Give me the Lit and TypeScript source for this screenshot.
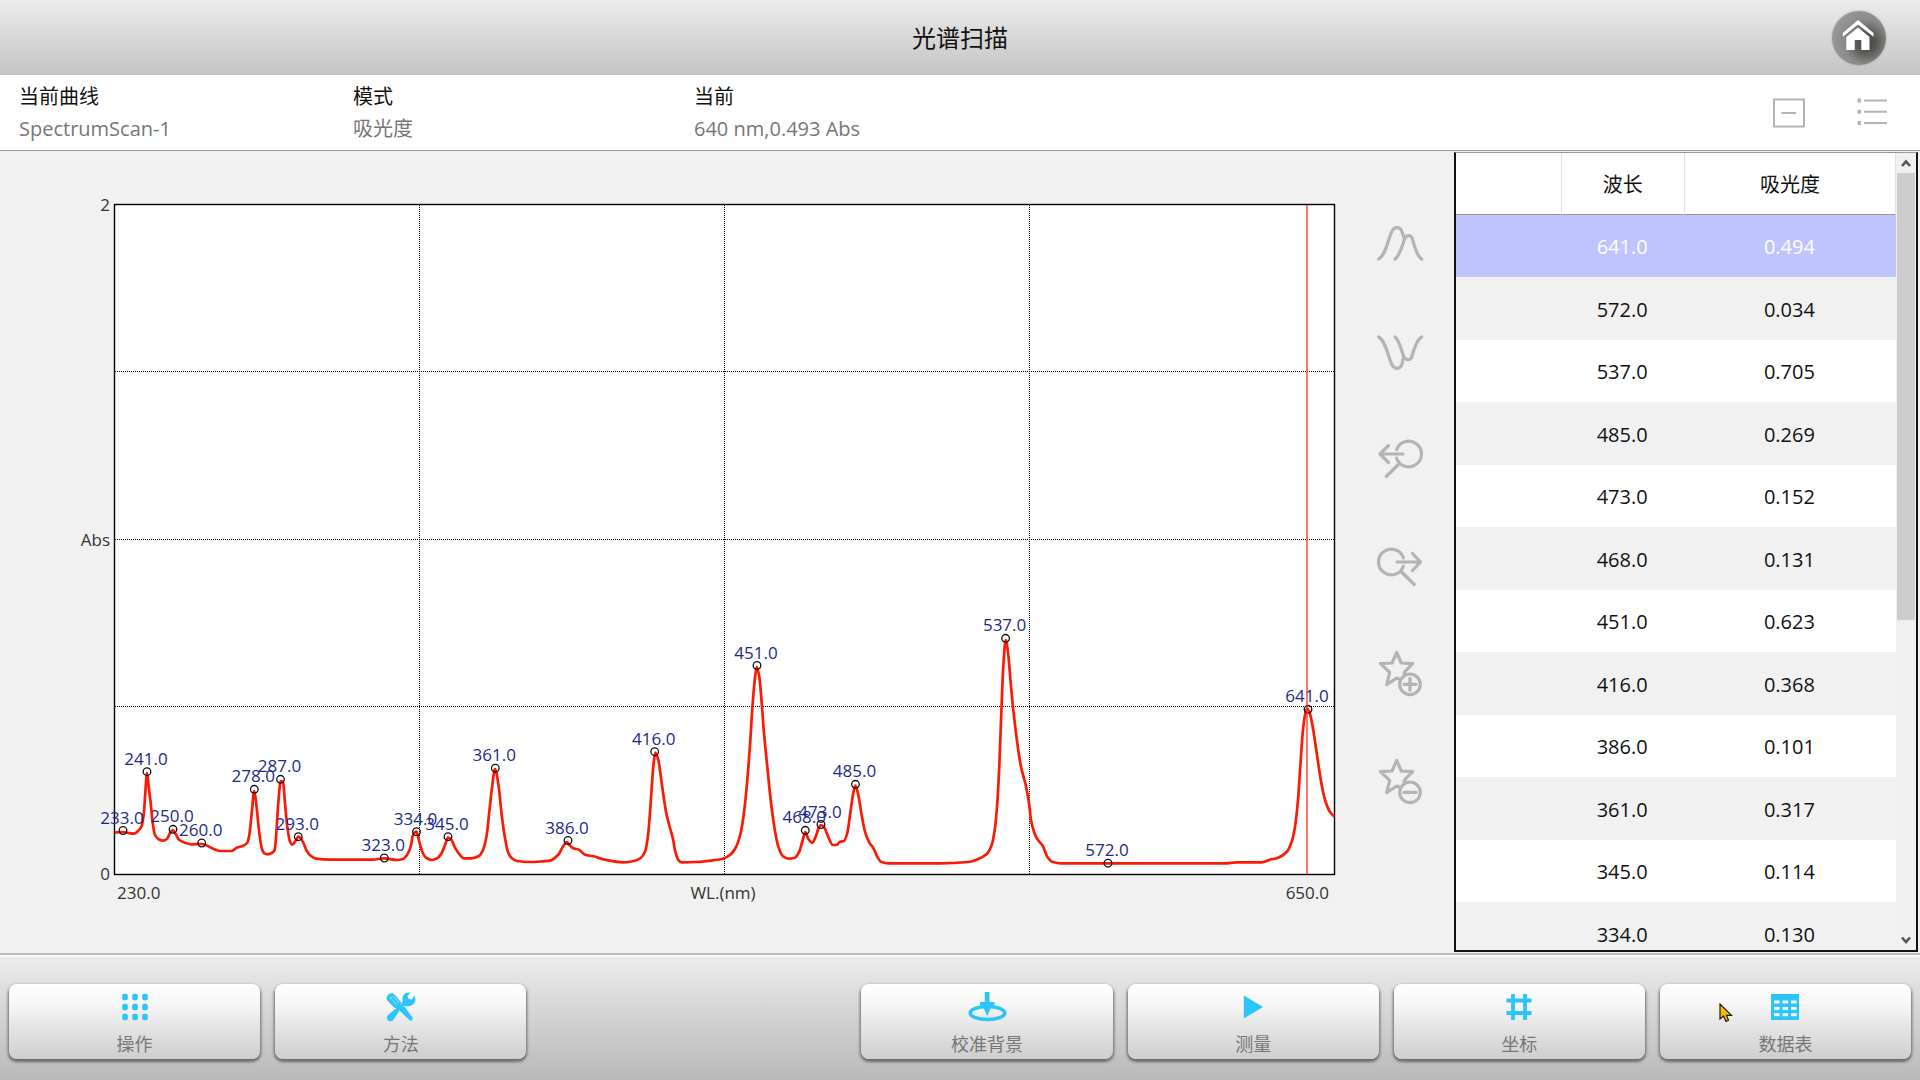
import { LitElement, html, css, svg } from "lit";
import { customElement, property, state } from "lit/decorators.js";

type Point = [number, number];

interface Peak {
  label: string;
  x: number;
  y: number;
}

/* Sampled trace, in the coordinates of the chart's view box. */
const TRACE: Point[] = [
  [114.5, 832.5], [123, 832], [128, 833], [134, 833.7], [138, 831], [141.7, 826], [144, 811.7],
  [145.3, 793], [147, 773], [148.7, 786.7], [150.7, 803], [152.7, 823], [155, 835], [158.3, 839],
  [163.3, 840.7], [166.7, 839], [170, 833.3], [172.7, 830], [175.7, 834], [179.3, 840], [185, 842.7],
  [191.7, 844.3], [201.7, 844], [206.7, 845.5], [211.7, 848], [220, 851], [231.7, 851], [236.7, 847.7],
  [243.3, 845.7], [247.3, 842.7], [249.3, 835], [251.7, 813], [254.3, 791], [256.7, 808], [259, 830],
  [261.7, 848], [264.3, 853.3], [267.7, 854.3], [271.7, 853], [274.7, 850], [276.3, 833], [278.3, 803],
  [280.7, 781], [283, 782], [285, 803], [287.3, 826.7], [290, 841.7], [292.3, 844.7], [295.7, 840.7],
  [298.3, 836.7], [302.3, 840.7], [306.7, 850.7], [310.7, 855.7], [316, 858.7], [330, 859.7],
  [373, 859.7], [384, 858.3], [396.7, 860], [403, 859], [407, 855], [410.7, 846.7], [413, 835],
  [416.5, 831.7], [419.3, 841.7], [422.3, 851.7], [425.7, 857.3], [431.7, 860], [437.3, 858.3],
  [441.7, 853], [445, 845], [448, 837.7], [451, 839.3], [455, 847.7], [460, 855], [464, 858.3],
  [471.7, 858.3], [479, 856], [483.3, 849.3], [486.7, 835], [489.3, 811.7], [492, 788], [495, 769],
  [498.7, 786.7], [501.7, 815], [505, 838], [508.3, 853], [511.7, 858], [516.7, 861], [530, 862],
  [543, 861.3], [550, 860.7], [558.3, 854.7], [562.7, 847], [566.7, 842], [570, 845.7], [573.3, 848.3],
  [579, 849.7], [585, 854.7], [593.3, 856.3], [605, 859.7], [623.3, 862.3], [635, 860.7],
  [640.7, 858], [645, 851.7], [647.7, 838], [649.7, 816.7], [651.7, 788], [653.3, 766.7],
  [655.3, 752.5], [658.3, 760], [661.7, 783], [666, 811.7], [670, 828], [673, 839], [675.3, 851.7],
  [678.3, 860], [681.7, 862.3], [696.7, 862], [713, 860.3], [723, 858.7], [730, 855], [736, 847],
  [740.7, 833], [744.3, 810], [747.3, 780], [750, 745], [752.7, 703], [755, 678], [756.7, 667],
  [759.3, 676.7], [761.7, 703], [764, 733], [767.3, 766.7], [770.7, 800], [774.3, 826.7],
  [778.3, 846.7], [782.7, 856], [788.3, 858.7], [795, 857.7], [799.3, 851.7], [802.7, 840],
  [805.3, 832], [808.3, 839], [812.3, 842.7], [815.7, 836.7], [818.3, 829], [821, 825],
  [824.3, 827.7], [828.3, 837], [832.7, 845], [836.7, 845], [840, 841.7], [844, 841], [847.3, 833],
  [850.3, 813], [852.7, 796.7], [855.3, 785.5], [858.3, 795], [861.3, 813], [865, 831.7],
  [869.3, 842.7], [873.3, 848], [877.3, 856.7], [881, 861.7], [888.3, 863.3], [940, 863.3],
  [968.3, 862], [978.3, 859], [986.7, 854], [991.7, 845], [995, 828], [997.3, 803], [999.3, 766.7],
  [1001.3, 713], [1003.3, 666.7], [1005.7, 640], [1008.3, 655], [1010.7, 683], [1013.3, 710],
  [1017.3, 743], [1021, 766.7], [1025.7, 785], [1029, 803], [1031, 820], [1034, 831.7],
  [1037.3, 839], [1042.7, 845.7], [1047.3, 856.7], [1052.7, 862], [1060.7, 863.3], [1108, 863.3],
  [1225, 863.3], [1236.7, 862.3], [1261.7, 862.3], [1270, 859.7], [1278, 857.7], [1286.7, 852],
  [1291.7, 841.7], [1295, 826.7], [1298, 800], [1300.3, 766.7], [1302.7, 733], [1305, 715],
  [1307, 708.7], [1309.3, 711.7], [1312.7, 726.7], [1316.7, 753], [1320, 775], [1323.3, 793],
  [1326.7, 805], [1330, 812], [1334.5, 816.7],
];

const PEAKS: Peak[] = [
  { label: "233.0", x: 123, y: 830.5 },
  { label: "241.0", x: 147, y: 771.7 },
  { label: "250.0", x: 173, y: 829.3 },
  { label: "260.0", x: 201.7, y: 843 },
  { label: "278.0", x: 254.3, y: 789.3 },
  { label: "287.0", x: 280.5, y: 779.3 },
  { label: "293.0", x: 298.3, y: 836.7 },
  { label: "323.0", x: 384.3, y: 858 },
  { label: "334.0", x: 416.5, y: 831.7 },
  { label: "345.0", x: 448, y: 836.7 },
  { label: "361.0", x: 495.3, y: 768.2 },
  { label: "386.0", x: 568, y: 840.5 },
  { label: "416.0", x: 654.7, y: 751.7 },
  { label: "451.0", x: 757, y: 665.5 },
  { label: "468.0", x: 805.3, y: 830.3 },
  { label: "473.0", x: 821, y: 824.5 },
  { label: "485.0", x: 855.5, y: 784.3 },
  { label: "537.0", x: 1005.6, y: 638.3 },
  { label: "572.0", x: 1108, y: 863.2 },
  { label: "641.0", x: 1308, y: 709.3 },
];

const ROWS: [string, string][] = [
  ["641.0", "0.494"],
  ["572.0", "0.034"],
  ["537.0", "0.705"],
  ["485.0", "0.269"],
  ["473.0", "0.152"],
  ["468.0", "0.131"],
  ["451.0", "0.623"],
  ["416.0", "0.368"],
  ["386.0", "0.101"],
  ["361.0", "0.317"],
  ["345.0", "0.114"],
  ["334.0", "0.130"],
];

/* Monotone cubic path through the points, so flat stretches never overshoot. */
function smoothPath(p: Point[]): string {
  const n = p.length;
  const d: number[] = [];
  for (let i = 0; i < n - 1; i++) d.push((p[i + 1][1] - p[i][1]) / (p[i + 1][0] - p[i][0]));
  const m = p.map((_, i) => {
    if (i === 0) return d[0];
    if (i === n - 1) return d[n - 2];
    const a = d[i - 1];
    const b = d[i];
    return a * b <= 0 ? 0 : (2 * a * b) / (a + b);
  });
  let out = `M${p[0][0]} ${p[0][1]}`;
  for (let i = 0; i < n - 1; i++) {
    const h = (p[i + 1][0] - p[i][0]) / 3;
    out += `C${(p[i][0] + h).toFixed(1)} ${(p[i][1] + m[i] * h).toFixed(1)} ${(p[i + 1][0] - h).toFixed(1)} ${(
      p[i + 1][1] - m[i + 1] * h
    ).toFixed(1)} ${p[i + 1][0]} ${p[i + 1][1]}`;
  }
  return out;
}

@customElement("spectrum-chart")
export class SpectrumChart extends LitElement {
  static styles = css`
    :host {
      display: grid;
      grid-template-columns: 114px minmax(0, 1fr);
      align-content: start;
      padding-top: 52px;
      font-size: 17px;
      line-height: 24px;
      color: #333;
    }
    .y-axis {
      display: flex;
      flex-direction: column;
      justify-content: space-between;
      align-items: flex-end;
      margin: -11px 0;
      padding-right: 4px;
    }
    .plot {
      display: block;
      width: 100%;
      height: auto;
      overflow: visible;
    }
    .x-axis {
      grid-column: 2;
      display: flex;
      justify-content: space-between;
      padding: 6px 6px 0 3px;
    }
    .area {
      fill: #fff;
      stroke: #000;
      stroke-width: 1.4;
    }
    .grid {
      fill: none;
      stroke: #000;
      stroke-dasharray: 1 1;
      shape-rendering: crispEdges;
    }
    .trace {
      fill: none;
      stroke: #fb1a05;
      stroke-width: 2.7;
      stroke-linejoin: round;
    }
    .cursor-line {
      stroke: #ff3a28;
      stroke-width: 1.4;
    }
    .marker {
      fill: none;
      stroke: #111;
      stroke-width: 1.3;
    }
    .label {
      fill: #1c2a8c;
      font-size: 17px;
      text-anchor: middle;
    }
  `;

  render() {
    return html`
      <div class="y-axis"><span>2</span><span>Abs</span><span>0</span></div>
      <svg class="plot" viewBox="114 204 1221 671" role="img" aria-label="光谱扫描">
        <rect class="area" x="114.5" y="204.5" width="1220" height="670" />
        <path
          class="grid"
          d="M419.5 205V874M724.5 205V874M1029.5 205V874M115 371.5H1334M115 539.5H1334M115 706.5H1334"
        />
        <path class="trace" d=${smoothPath(TRACE)} />
        ${PEAKS.map(
          (p) => svg`<circle class="marker" cx=${p.x} cy=${p.y} r="3.8" />
            <text class="label" x=${p.x - 1} y=${p.y - 7}>${p.label}</text>`
        )}
        <path class="cursor-line" d="M1307 205V874" />
      </svg>
      <div class="x-axis"><span>230.0</span><span>WL.(nm)</span><span>650.0</span></div>
    `;
  }
}

const TOOL_ICONS: [string, unknown][] = [
  ["峰", svg`<path d="M2.7 40C9 37 12 22 15 14.500C17.500 7 24 7 26 13L28.500 20" /><path d="M19 40.300C24 36 26.500 26 28.500 20C30.500 15.500 35 15.500 36.500 20C38.500 28 41 37 45.700 40.300" />`],
  ["谷", svg`<path d="M2.700 10C9 13.500 12 27.500 15 35.500C17.500 43 24 43 26 37L27.500 30.500" /><path d="M19 10C23.500 13.500 25.500 23.500 27.500 29C29 33.500 34 33.500 35.500 30.500C37.500 23.500 40.500 12.500 45.700 10" />`],
  ["上一个", svg`<path d="M20.600 15.800A12.800 12.800 0 1 1 20.600 24.200M27 20H4M12.500 11.500L4 20L12.500 28.500M23.500 29.500L10.200 42.500" />`],
  ["下一个", svg`<path d="M27.400 15.800A12.800 12.800 0 1 0 27.400 24.200M21 20H44.500M36.500 11.500L44.500 20L36.500 28.500M25 29.500L38.300 42.500" />`],
  ["添加标记", svg`<path d="M28 25.500L29 22.300L36.700 14.600L25.300 14L20.700 3.500L16 14L4.500 14.600L13.700 23.300L10.700 35.600L20.700 29L23 30" /><circle cx="34" cy="35.300" r="10.300" /><path d="M28 35.300H40M34 29.300V41.300" />`],
  ["删除标记", svg`<path d="M28 25.500L29 22.300L36.700 14.600L25.300 14L20.700 3.500L16 14L4.500 14.600L13.700 23.300L10.700 35.600L20.700 29L23 30" /><circle cx="34" cy="35.300" r="10.300" /><path d="M28 35.300H40" />`],
];

@customElement("chart-tools")
export class ChartTools extends LitElement {
  static styles = css`
    :host {
      display: flex;
      flex-direction: column;
      justify-content: space-between;
      align-items: center;
      padding: 67px 0 147px 11px;
    }
    .tool {
      width: 48px;
      height: 48px;
      padding: 0;
      border: 0;
      background: none;
      cursor: pointer;
    }
    .icon {
      display: block;
      width: 48px;
      height: 48px;
      fill: none;
      stroke: #b4b4b4;
      stroke-width: 3.2;
      stroke-linecap: round;
      stroke-linejoin: round;
    }
  `;

  render() {
    return TOOL_ICONS.map(
      ([name, icon]) => html`<button class="tool" type="button" aria-label=${name}>
        <svg class="icon" viewBox="0 0 48 48" aria-hidden="true">${icon}</svg>
      </button>`
    );
  }
}

@customElement("peak-table")
export class PeakTable extends LitElement {
  @state() private selected = 0;

  static styles = css`
    :host {
      display: flex;
      min-height: 0;
      border: 2px solid #111;
      border-top: 1px solid #999;
      background: #fff;
      box-sizing: border-box;
    }
    .view {
      flex: 1;
      min-width: 0;
      overflow: hidden;
    }
    .table {
      width: 100%;
      border-collapse: separate;
      border-spacing: 0;
      table-layout: fixed;
      font-size: 20px;
      line-height: 28px;
      color: #111;
    }
    .blank {
      width: 24%;
    }
    .wave {
      width: 28%;
    }
    th {
      height: 62px;
      padding: 2px 0 0;
      box-sizing: border-box;
      border-right: 1px solid #e2e2e2;
      border-bottom: 1px solid #999;
      font-weight: 400;
    }
    td {
      height: 62px;
      box-sizing: border-box;
      padding: 2px 2px 0 0;
      text-align: center;
    }
    .row:nth-child(even) td {
      height: 63px;
      background: #f1f1f1;
    }
    .row.selected td {
      background: #bfc4ff;
      color: #fff;
    }
    .scrollbar {
      width: 20px;
      display: flex;
      flex-direction: column;
      background: #f0f0f0;
    }
    .arrow {
      height: 20px;
      padding: 0;
      border: 0;
      background: none;
    }
    .chevron {
      display: block;
      margin: auto;
      width: 12px;
      height: 12px;
      fill: none;
      stroke: #555;
      stroke-width: 2.6;
    }
    .track {
      flex: 1;
      padding: 0 1px;
    }
    .thumb {
      height: 59%;
      background: #cdcdcd;
    }
  `;

  render() {
    return html`
      <div class="view">
        <table class="table">
          <thead>
            <tr>
              <th class="blank"></th>
              <th class="wave">波长</th>
              <th>吸光度</th>
            </tr>
          </thead>
          <tbody>
            ${ROWS.map(
              ([wl, abs], i) => html`<tr
                class="row ${i === this.selected ? "selected" : ""}"
                @click=${() => (this.selected = i)}
              >
                <td></td>
                <td>${wl}</td>
                <td>${abs}</td>
              </tr>`
            )}
          </tbody>
        </table>
      </div>
      <div class="scrollbar">
        <button class="arrow" type="button" aria-label="向上">
          <svg class="chevron" viewBox="0 0 12 12"><path d="M2 9L6 4.500L10 9" /></svg>
        </button>
        <div class="track"><div class="thumb"></div></div>
        <button class="arrow" type="button" aria-label="向下">
          <svg class="chevron" viewBox="0 0 12 12"><path d="M2 3.500L6 8L10 3.500" /></svg>
        </button>
      </div>
    `;
  }
}

const ACTION_ICONS: Record<string, unknown> = {
  操作: svg`${[10, 20, 30].map((x) =>
    [6, 16, 26].map((y) => svg`<rect x=${x - 2.8} y=${y - 3.2} width="5.600" height="6.400" rx="2" />`)
  )}`,
  方法: svg`<path d="M6.500 4.500C8.500 1.500 12 1.500 14 4L20.500 12L17 17.500L13 16.500L6.500 9.500C5 8 5.200 6 6.500 4.500Z" />
    <path d="M27 1.500C23 2 20.500 6 21.800 10L20 13.500L7 24C5.500 25.500 5.500 28 7 29.500C8.500 31 11 30.500 12.300 29L19.500 18L23.500 14.800C28 16.500 33.500 14 34.500 9.500L33.800 4.500L30.500 8.500L27.500 8L26.500 5L29.500 1.700Z" />
    <path d="M20 16L23.500 15.500L31.500 26.500C32.500 28.500 30.500 30.500 28.800 29.500L18.500 19.500Z" />
    <path class="groove" d="M9 6L15.500 13.500M12 5L18 12" />`,
  校准背景: svg`<ellipse class="ring" cx="20.500" cy="22" rx="17.300" ry="6.500" />
    <path d="M17.800 1H22.500V11H27.500V14.500H25L20.200 25L15.500 14.500H13V11H17.800Z" />`,
  测量: svg`<path d="M10.800 4.500L30 16L10.800 27.500Z" />`,
  坐标: svg`<path class="bars" d="M14 3V29M26 3V29M7.500 9.500H32.500M7.500 22H32.500" />`,
  数据表: svg`<path d="M6 3H34V29H6Z" />
    ${[9, 17.5, 26].map((x) =>
      [9.5, 15.9, 22.2].map((y) => svg`<rect class="cell" x=${x} y=${y} width="5.600" height="3" />`)
    )}`,
};

@customElement("action-button")
export class ActionButton extends LitElement {
  @property() label = "";

  static styles = css`
    :host {
      display: block;
      position: relative;
      min-width: 0;
    }
    .button {
      display: flex;
      flex-direction: column;
      align-items: center;
      gap: 9px;
      width: 100%;
      height: 75px;
      padding: 7px 0 0;
      border: 0;
      border-radius: 8px;
      background: linear-gradient(#fff 0%, #f6f6f6 28%, #e6e6e6 55%, #cecece 100%);
      box-shadow: 0 2px 3px 1px #6a6a6a;
      font: inherit;
      font-size: 18px;
      line-height: 24px;
      color: #777;
      cursor: pointer;
    }
    .icon {
      display: block;
      width: 40px;
      height: 32px;
      fill: #2cc4f9;
    }
    .groove {
      fill: none;
      stroke: #bfeeff;
      stroke-width: 0.8;
    }
    .ring {
      fill: none;
      stroke: #2cc4f9;
      stroke-width: 3.4;
    }
    .bars {
      stroke: #2cc4f9;
      stroke-width: 3.8;
    }
    .cell {
      fill: #f3f8fa;
    }
  `;

  render() {
    return html`<button class="button" type="button">
        <svg class="icon" viewBox="0 0 40 32" aria-hidden="true">${ACTION_ICONS[this.label]}</svg>
        <span>${this.label}</span></button
      ><slot></slot>`;
  }
}

@customElement("app-root")
export class AppRoot extends LitElement {
  static styles = css`
    :host {
      display: flex;
      flex-direction: column;
      height: 100vh;
      overflow: hidden;
      background: #f1f1f1;
      font-family: "Open Sans", "Noto Sans CJK SC", sans-serif;
      color: #111;
    }
    .header {
      display: grid;
      grid-template-columns: 1fr auto 1fr;
      align-items: center;
      height: 75px;
      padding: 1px 34px 0;
      box-sizing: border-box;
      background: linear-gradient(#ececec, #c4c4c4);
    }
    .title {
      grid-column: 2;
      margin: 0;
      font-size: 24px;
      line-height: 36px;
      font-weight: 400;
    }
    .home {
      justify-self: end;
      width: 54px;
      height: 54px;
      padding: 0;
      border: 0;
      border-radius: 50%;
      background: radial-gradient(circle at 64% 58%, #454542 0%, #555552 20%, #8a8a8a 48%, #989898 75%);
      box-shadow: 0 0 2px #999;
    }
    .home-icon {
      display: block;
      width: 54px;
      height: 54px;
      fill: #fff;
    }
    .info {
      display: grid;
      grid-template-columns: 334px 341px minmax(0, 1fr) auto;
      align-items: center;
      height: 76px;
      padding: 0 32px 0 19px;
      border-bottom: 1px solid #999;
      background: #fff;
      box-sizing: border-box;
    }
    .fact {
      font-size: 20px;
      line-height: 32px;
      padding-top: 1px;
    }
    .name,
    .value {
      margin: 0;
    }
    .value {
      color: #777;
    }
    .views {
      display: flex;
      gap: 51px;
      padding-top: 1px;
    }
    .view {
      padding: 0;
      border: 0;
      background: none;
    }
    .view-icon {
      display: block;
      width: 32px;
      height: 32px;
      fill: none;
      stroke: #b4b4b4;
      stroke-width: 2;
    }
    .dots {
      fill: #b4b4b4;
      stroke: none;
    }
    .main {
      flex: 1;
      min-height: 0;
      display: grid;
      grid-template-columns: minmax(0, 1fr) 119px 464px;
      grid-template-rows: minmax(0, 1fr);
      padding: 1px 2px 1px 0;
    }
    .footer {
      display: grid;
      grid-template-columns: 251fr 251fr 305fr 251fr 251fr 251fr 251fr;
      gap: 15px;
      padding: 29px 9px 21px 9px;
      border-top: 2px solid #bbb;
      background: linear-gradient(#fff 0, #fff 1px, #ececec 2px, #b9b9b9 100%);
    }
    .measure {
      grid-column: 4;
    }
    .pointer {
      position: absolute;
      left: 59px;
      top: 19px;
      width: 14px;
      height: 20px;
      fill: #ffb80c;
      stroke: #20180a;
      stroke-width: 1.2;
      pointer-events: none;
    }
  `;

  render() {
    return html`
      <header class="header">
        <h1 class="title">光谱扫描</h1>
        <button class="home" type="button" aria-label="主页">
          <svg class="home-icon" viewBox="0 0 54 54" aria-hidden="true">
            <path d="M26 9L41.500 22V25.800L26 13.500L10.800 25.800V22Z" />
            <path d="M26 16.500L37.500 26V39H29.300V29H22.700V39H14.300V26Z" />
          </svg>
        </button>
      </header>
      <section class="info">
        <div class="fact"><p class="name">当前曲线</p><p class="value">SpectrumScan-1</p></div>
        <div class="fact"><p class="name">模式</p><p class="value">吸光度</p></div>
        <div class="fact"><p class="name">当前</p><p class="value">640 nm,0.493 Abs</p></div>
        <div class="views">
          <button class="view" type="button" aria-label="收起">
            <svg class="view-icon" viewBox="0 0 32 32"><path d="M1 2.500H31V29.500H1ZM8.500 16H23" /></svg>
          </button>
          <button class="view" type="button" aria-label="列表">
            <svg class="view-icon" viewBox="0 0 32 32">
              <path d="M8 3.500H31M8 14.800H31M8 26H31" />
              <path class="dots" d="M1.500 1.500H5V5.500H1.500ZM1.500 12.800H5V16.800H1.500ZM1.500 24H5V28H1.500Z" />
            </svg>
          </button>
        </div>
      </section>
      <main class="main">
        <spectrum-chart></spectrum-chart>
        <chart-tools></chart-tools>
        <peak-table></peak-table>
      </main>
      <footer class="footer">
        <action-button label="操作"></action-button>
        <action-button label="方法"></action-button>
        <action-button class="measure" label="校准背景"></action-button>
        <action-button label="测量"></action-button>
        <action-button label="坐标"></action-button>
        <action-button label="数据表">
          <svg class="pointer" viewBox="0 0 14 20" aria-hidden="true">
            <path d="M1 1V16L4.500 13L7 18.500L9.500 17.300L7.500 12.300H12.500Z" />
          </svg>
        </action-button>
      </footer>
    `;
  }
}
